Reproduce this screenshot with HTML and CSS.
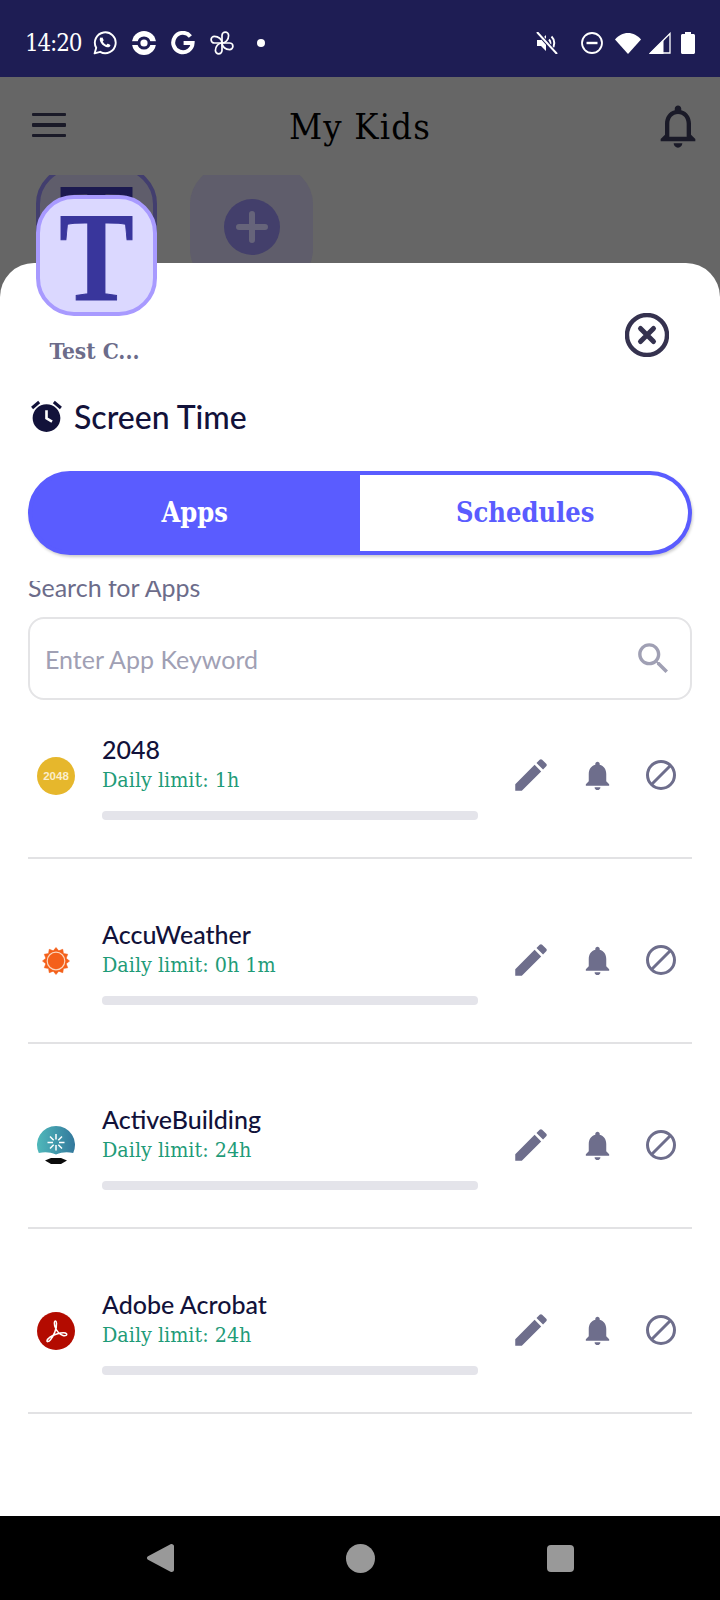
FILE: index.html
```html
<!DOCTYPE html>
<html lang="en">
<head>
<meta charset="utf-8">
<title>My Kids</title>
<link rel="stylesheet" href="styles.css">
</head>
<body>
<div class="status">
  <span class="time">14:20</span>
  <svg class="st st-wa" viewBox="0 0 24 24"><path class="ol" d="M1.600 22.400l1.600-5.600A10.400 10.400 0 1 1 7.200 20.800z"/><path class="wf" d="M8.600 6.800c.3-.3.9-.3 1.100.1l.9 2c.1.3 0 .6-.2.8l-.7.8c.8 1.500 2 2.700 3.600 3.400l.9-.9c.2-.2.5-.3.8-.2l2 1c.4.2.5.6.3 1-.6 1.100-1.700 1.700-2.900 1.500-3.700-.7-7.100-4-7.700-7.600-.1-.9.2-1.500.7-2.100z"/></svg>
  <svg class="st st-pk" viewBox="0 0 24 24"><circle class="wf" cx="12" cy="12" r="12"/><rect class="df" x="0" y="10.200" width="24" height="3.800"/><circle class="df" cx="12" cy="12" r="6.600"/><circle class="wf" cx="12" cy="12" r="3.600"/></svg>
  <svg class="st st-g" viewBox="0 0 24 24"><path class="gs" d="M19.400 5.400A9.700 9.700 0 1 0 21.600 12H12.600"/></svg>
  <svg class="st st-pin" viewBox="0 0 24 24"><g class="pw"><path d="M12 12V4.400a3.300 3.300 0 0 1 6.600 0c0 4-2.800 7.600-6.600 7.600z"/><path transform="rotate(90 12 12)" d="M12 12V4.400a3.300 3.300 0 0 1 6.600 0c0 4-2.800 7.600-6.600 7.600z"/><path transform="rotate(180 12 12)" d="M12 12V4.400a3.300 3.300 0 0 1 6.600 0c0 4-2.800 7.600-6.600 7.600z"/><path transform="rotate(270 12 12)" d="M12 12V4.400a3.300 3.300 0 0 1 6.600 0c0 4-2.800 7.600-6.600 7.600z"/></g></svg>
  <span class="dot"></span>
  <div class="st-right">
    <svg class="st st-mute" viewBox="0 0 22 22"><path class="wf" d="M1 8v6h4l5 5V3L5 8z"/><path class="ms" d="M13 7.500a5 5 0 0 1 0 7M15.500 4.500a9 9 0 0 1 0 13"/><path class="mk" d="M2 1l18 20"/><path class="ml" d="M1 0l20 22"/></svg>
    <svg class="st st-dnd" viewBox="0 0 22 22"><circle class="dn" cx="11" cy="11" r="10"/><rect class="wf" x="5.500" y="9.800" width="11" height="2.400"/></svg>
    <svg class="st st-wifi" viewBox="0 0 26 21"><path class="wf" d="M0 6.500C3.400 2.400 8 0 13 0s9.600 2.400 13 6.500L13 21z"/></svg>
    <svg class="st st-sig" viewBox="0 0 22 22"><path class="sg" d="M21 1.500V21H1.500z"/><path class="wf" d="M14.500 8v14H0z"/></svg>
    <svg class="st st-bat" viewBox="0 0 14 22"><path class="wf" d="M4 2V0h6v2h2.500c.8 0 1.500.7 1.500 1.500v17c0 .8-.7 1.500-1.500 1.500h-11C.7 22 0 21.300 0 20.500v-17C0 2.700.7 2 1.500 2z"/></svg>
  </div>
</div>

<div class="screen">
  <header class="topbar">
    <div class="burger"><span></span><span></span><span></span></div>
    <h1 class="title">My Kids</h1>
    <svg class="top-bell" viewBox="0 0 24 24"><path d="M12 22c1.100 0 2-.9 2-2h-4c0 1.100.89 2 2 2zm6-6v-5c0-3.070-1.640-5.640-4.500-6.320V4c0-.83-.67-1.500-1.500-1.500s-1.500.67-1.500 1.500v.68C7.630 5.360 6 7.920 6 11v5l-2 2v1h16v-1l-2-2zm-2 1H8v-6c0-2.480 1.510-4.500 4-4.500s4 2.020 4 4.500v6z"/></svg>
  </header>
  <div class="kids">
    <div class="kid-tile"><span class="kid-letter">T</span></div>
    <div class="add-tile"><svg class="add-icon" viewBox="0 0 56 56"><circle cx="28" cy="28" r="28"/><path d="M28 15v26M15 28h26"/></svg></div>
  </div>

  <section class="sheet">
    <div class="sheet-top">
      <div class="kid-col">
        <div class="avatar"><span class="avatar-letter">T</span></div>
        <div class="kid-name">Test C...</div>
      </div>
      <svg class="close" viewBox="0 0 44 44"><circle cx="22" cy="22" r="20"/><path d="M15.500 15.500l13 13M28.500 15.500l-13 13"/></svg>
    </div>

    <div class="heading">
      <svg class="alarm" viewBox="0 0 24 24"><path class="al" d="M22 5.720l-4.600-3.860-1.290 1.530 4.600 3.860L22 5.720zM7.880 3.390L6.600 1.860 2 5.710l1.290 1.530 4.590-3.850zM12 4c-4.970 0-9 4.030-9 9s4.020 9 9 9c4.970 0 9-4.030 9-9s-4.030-9-9-9z"/><path class="ah" d="M12 8v5.200l3.600 2.200"/></svg>
      <h2 class="heading-text">Screen Time</h2>
    </div>

    <div class="segment">
      <div class="seg seg-on">Apps</div>
      <div class="seg seg-off">Schedules</div>
    </div>

    <div class="scroll">
      <div class="search-label">Search for Apps</div>
      <div class="search">
        <span class="placeholder">Enter App Keyword</span>
        <svg class="search-icon" viewBox="0 0 24 24"><path d="M15.500 14h-.79l-.28-.27C15.410 12.590 16 11.110 16 9.500 16 5.910 13.090 3 9.500 3S3 5.910 3 9.500 5.910 16 9.500 16c1.610 0 3.090-.59 4.230-1.570l.27.28v.79l5 4.990L20.490 19l-4.990-5zm-6 0C7.010 14 5 11.990 5 9.500S7.010 5 9.500 5 14 7.010 14 9.500 11.990 14 9.500 14z"/></svg>
      </div>

      <div class="list">
        <article class="row">
          <div class="app-icon ic-2048"><span>2048</span></div>
          <div class="info">
            <div class="app-name">2048</div>
            <div class="limit">Daily limit: 1h</div>
            <div class="bar"></div>
          </div>
          <div class="actions">
            <svg class="a-edit" viewBox="0 0 24 24"><path d="M3 17.250V21h3.750L17.810 9.940l-3.750-3.750L3 17.250zM20.710 7.040c.39-.39.39-1.020 0-1.410l-2.340-2.340c-.39-.39-1.020-.39-1.410 0l-1.830 1.830 3.750 3.750 1.830-1.830z"/></svg>
            <svg class="a-bell" viewBox="0 0 24 24"><path d="M12 22c1.100 0 2-.9 2-2h-4c0 1.100.89 2 2 2zm6-6v-5c0-3.070-1.640-5.640-4.500-6.320V4c0-.83-.67-1.500-1.500-1.500s-1.500.67-1.500 1.500v.68C7.630 5.360 6 7.920 6 11v5l-2 2v1h16v-1l-2-2z"/></svg>
            <svg class="a-ban" viewBox="0 0 32 32"><circle cx="16" cy="16" r="13.500"/><path d="M6.500 25.500l19-19"/></svg>
          </div>
        </article>

        <article class="row">
          <div class="app-icon">
            <svg class="logo" viewBox="0 0 38 38"><polygon class="sun-spikes" points="19,5.500 21.720,8.860 25.750,7.310 26.420,11.580 30.690,12.250 29.140,16.280 32.500,19 29.140,21.720 30.690,25.750 26.420,26.420 25.750,30.690 21.720,29.140 19,32.500 16.280,29.140 12.250,30.690 11.580,26.420 7.310,25.750 8.860,21.720 5.500,19 8.860,16.280 7.310,12.250 11.580,11.580 12.250,7.310 16.280,8.860"/><circle class="sun-ring" cx="19" cy="19" r="8.800"/></svg>
          </div>
          <div class="info">
            <div class="app-name">AccuWeather</div>
            <div class="limit">Daily limit: 0h 1m</div>
            <div class="bar"></div>
          </div>
          <div class="actions">
            <svg class="a-edit" viewBox="0 0 24 24"><path d="M3 17.250V21h3.750L17.810 9.940l-3.750-3.750L3 17.250zM20.710 7.040c.39-.39.39-1.020 0-1.410l-2.340-2.340c-.39-.39-1.020-.39-1.410 0l-1.830 1.830 3.750 3.750 1.830-1.830z"/></svg>
            <svg class="a-bell" viewBox="0 0 24 24"><path d="M12 22c1.100 0 2-.9 2-2h-4c0 1.100.89 2 2 2zm6-6v-5c0-3.070-1.640-5.640-4.500-6.320V4c0-.83-.67-1.500-1.500-1.500s-1.500.67-1.500 1.500v.68C7.630 5.360 6 7.920 6 11v5l-2 2v1h16v-1l-2-2z"/></svg>
            <svg class="a-ban" viewBox="0 0 32 32"><circle cx="16" cy="16" r="13.500"/><path d="M6.500 25.500l19-19"/></svg>
          </div>
        </article>

        <article class="row">
          <div class="app-icon">
            <svg class="logo" viewBox="0 0 38 38"><defs><linearGradient id="ab" x1="0" y1="0" x2="1" y2="0"><stop offset="0" stop-color="#4fb8ba"/><stop offset="1" stop-color="#33789c"/></linearGradient></defs><path fill="url(#ab)" d="M1.800 26A19 19 0 1 1 36.200 26C30 24.600 25 25 19 27.500 13 25 8 24.600 1.800 26z"/><path class="burst" d="M19 7v5.500M19 18v5.500M10.500 15.500h5.500M22 15.500h5.500M13 9.500l3.700 3.700M21.300 17.800l3.700 3.700M25 9.500l-3.700 3.700M16.700 17.800l-3.700 3.700"/><path class="dark" d="M8 33.500l6-2.500h10l6 2.500-6 3.500h-10z"/></svg>
          </div>
          <div class="info">
            <div class="app-name">ActiveBuilding</div>
            <div class="limit">Daily limit: 24h</div>
            <div class="bar"></div>
          </div>
          <div class="actions">
            <svg class="a-edit" viewBox="0 0 24 24"><path d="M3 17.250V21h3.750L17.810 9.940l-3.750-3.750L3 17.250zM20.710 7.040c.39-.39.39-1.020 0-1.410l-2.340-2.340c-.39-.39-1.020-.39-1.410 0l-1.830 1.830 3.750 3.750 1.830-1.830z"/></svg>
            <svg class="a-bell" viewBox="0 0 24 24"><path d="M12 22c1.100 0 2-.9 2-2h-4c0 1.100.89 2 2 2zm6-6v-5c0-3.070-1.640-5.640-4.500-6.320V4c0-.83-.67-1.500-1.500-1.500s-1.500.67-1.500 1.500v.68C7.630 5.360 6 7.920 6 11v5l-2 2v1h16v-1l-2-2z"/></svg>
            <svg class="a-ban" viewBox="0 0 32 32"><circle cx="16" cy="16" r="13.500"/><path d="M6.500 25.500l19-19"/></svg>
          </div>
        </article>

        <article class="row">
          <div class="app-icon">
            <svg class="logo" viewBox="0 0 38 38"><circle class="red" cx="19" cy="19" r="19"/><path class="acro" d="M18.500 9c-1.500 0-1.500 3.500 0 7 1.500 3.500 4.500 6.500 7.500 7.500 2.500.8 4.500-.5 3.500-1.800-1-1.200-5.500-1-10.500.5-4.500 1.400-8.500 4.500-9 6.500-.3 1.300 1.500 1.500 3.500-1 3-3.700 6.500-11 6-16.500-.1-1.200-.5-2.200-1-2.200z"/></svg>
          </div>
          <div class="info">
            <div class="app-name">Adobe Acrobat</div>
            <div class="limit">Daily limit: 24h</div>
            <div class="bar"></div>
          </div>
          <div class="actions">
            <svg class="a-edit" viewBox="0 0 24 24"><path d="M3 17.250V21h3.750L17.810 9.940l-3.750-3.750L3 17.250zM20.710 7.040c.39-.39.39-1.020 0-1.410l-2.340-2.340c-.39-.39-1.020-.39-1.410 0l-1.830 1.830 3.750 3.750 1.830-1.830z"/></svg>
            <svg class="a-bell" viewBox="0 0 24 24"><path d="M12 22c1.100 0 2-.9 2-2h-4c0 1.100.89 2 2 2zm6-6v-5c0-3.070-1.640-5.640-4.500-6.320V4c0-.83-.67-1.500-1.500-1.500s-1.500.67-1.500 1.500v.68C7.630 5.360 6 7.920 6 11v5l-2 2v1h16v-1l-2-2z"/></svg>
            <svg class="a-ban" viewBox="0 0 32 32"><circle cx="16" cy="16" r="13.500"/><path d="M6.500 25.500l19-19"/></svg>
          </div>
        </article>
      </div>
    </div>
  </section>
</div>

<nav class="navbar">
  <svg class="nav-back" viewBox="0 0 28 30"><path d="M24.500 1.200 2 13.200c-1.400.8-1.400 2.800 0 3.600l22.500 12c1.500.8 3.500-.2 3.500-2V3.200c0-1.800-2-2.800-3.500-2z"/></svg>
  <span class="nav-home"></span>
  <span class="nav-recent"></span>
</nav>
</body>
</html>
```

FILE: styles.css
```css
* { box-sizing: border-box; }
html, body { margin: 0; padding: 0; }
body {
  width: 720px;
  height: 1600px;
  display: flex;
  flex-direction: column;
  overflow: hidden;
  background: #fff;
  font-family: "Lato", sans-serif;
}

/* status bar */
.status {
  height: 77px;
  flex: none;
  background: #1e1d54;
  display: flex;
  align-items: center;
  padding: 9px 25px 0 25px;
  color: #fff;
}
.time {
  font-family: "DejaVu Serif Condensed", "DejaVu Serif", serif;
  font-size: 24px;
  width: 56px;
  letter-spacing: -1.2px;
  white-space: nowrap;
}
.st { display: block; flex: none; }
.wf { fill: #fff; }
.df { fill: #1e1d54; }
.ol { fill: none; stroke: #fff; stroke-width: 1.9; stroke-linejoin: round; }
.gs { fill: none; stroke: #fff; stroke-width: 4; }
.pw path { fill: none; stroke: #fff; stroke-width: 1.7; stroke-linejoin: round; }
.ms { fill: none; stroke: #fff; stroke-width: 2; }
.mk { fill: none; stroke: #1e1d54; stroke-width: 4; }
.ml { fill: none; stroke: #fff; stroke-width: 2; }
.dn { fill: none; stroke: #fff; stroke-width: 1.8; }
.sg { fill: none; stroke: #fff; stroke-width: 1.3; }
.st-wa { width: 24px; height: 24px; margin-left: 12px; }
.st-pk { width: 24px; height: 24px; margin-left: 15px; }
.st-g { width: 24px; height: 24px; margin-left: 15px; }
.st-pin { width: 24px; height: 24px; margin-left: 15px; }
.dot { width: 8px; height: 8px; border-radius: 50%; background: #fff; margin-left: 23px; flex: none; }
.st-right { margin-left: auto; display: flex; align-items: center; }
.st-mute { width: 22px; height: 22px; }
.st-dnd { width: 22px; height: 22px; margin-left: 23px; }
.st-wifi { width: 26px; height: 21px; margin-left: 12px; }
.st-sig { width: 22px; height: 22px; margin-left: 8px; }
.st-bat { width: 14px; height: 22px; margin-left: 10px; }

/* dimmed screen */
.screen {
  flex: 1;
  position: relative;
  background: #666;
  min-height: 0;
}
.topbar {
  height: 98px;
  display: grid;
  grid-template-columns: 1fr auto 1fr;
  align-items: center;
  padding: 0 16px;
}
.burger {
  display: flex;
  flex-direction: column;
  gap: 7px;
  width: 34px;
  margin: -2px 0 0 16px;
}
.burger span { height: 3.5px; background: #1a1a28; border-radius: 1px; }
.title {
  margin: 0;
  font-family: "DejaVu Serif Condensed", "DejaVu Serif", serif;
  font-weight: 400;
  font-size: 36px;
  letter-spacing: 1.2px;
  color: #000;
  white-space: nowrap;
}
.top-bell { width: 52px; height: 52px; justify-self: end; fill: #1a1a28; }

.kids {
  height: 88px;
  overflow: hidden;
  display: flex;
  gap: 33px;
  padding-left: 36px;
}
.kid-tile, .add-tile {
  flex: none;
  margin-top: -9px;
  height: 121px;
  border-radius: 38px;
  background: #5f5d6b;
  display: flex;
  align-items: center;
  justify-content: center;
}
.kid-tile {
  width: 121px;
  border: 4px solid #423e6e;
  color: #1c1a50;
}
.add-tile { width: 123px; }
.kid-letter, .avatar-letter {
  display: inline-block;
  font-family: "Liberation Serif", serif;
  font-weight: 700;
  font-size: 124px;
  line-height: 1;
  -webkit-text-stroke: 1px currentColor;
  transform: translateY(2px) scale(.9, 1.03);
}
.add-icon { width: 56px; height: 56px; }
.add-icon circle { fill: #433f6b; }
.add-icon path { fill: none; stroke: #66647a; stroke-width: 6; stroke-linecap: round; }

/* sheet */
.sheet {
  position: absolute;
  top: 186px;
  left: 0;
  right: 0;
  bottom: 0;
  background: #fff;
  border-radius: 34px 34px 0 0;
  padding: 0 28px;
  display: flex;
  flex-direction: column;
}
.sheet-top {
  display: flex;
  justify-content: space-between;
  align-items: flex-start;
  margin-top: -68px;
}
.kid-col { margin-left: 8px; width: 121px; }
.avatar {
  width: 121px;
  height: 121px;
  border: 4.5px solid #a89aff;
  border-radius: 38px;
  background: #dbd8ff;
  color: #39369c;
  display: flex;
  align-items: center;
  justify-content: center;
}
.kid-name {
  margin-top: 20px;
  padding-right: 4px;
  text-align: center;
  font-family: "DejaVu Serif Condensed", "DejaVu Serif", serif;
  font-weight: 700;
  font-size: 22.5px;
  line-height: 30px;
  color: #6c6c8a;
  white-space: nowrap;
}
.close { width: 44px; height: 44px; margin: 118px 23px 0 0; flex: none; }
.close circle { fill: none; stroke: #35324f; stroke-width: 4.4; }
.close path { fill: none; stroke: #35324f; stroke-width: 5; stroke-linecap: round; }

.heading {
  display: flex;
  align-items: center;
  margin-top: 30px;
  height: 40px;
  gap: 9px;
}
.alarm { width: 37px; height: 37px; flex: none; }
.al { fill: #12123a; }
.ah { fill: none; stroke: #fff; stroke-width: 1.7; }
.heading-text {
  margin: 0;
  font-weight: 500;
  font-size: 32px;
  color: #12123a;
  white-space: nowrap;
}

.segment {
  margin-top: 34.5px;
  height: 84px;
  border: 4px solid #5a5cff;
  border-radius: 42px;
  background: #5a5cff;
  overflow: hidden;
  display: flex;
  flex: none;
  box-shadow: 1px 2px 3px rgba(0, 0, 0, .2);
  font-family: "DejaVu Serif Condensed", "DejaVu Serif", serif;
  font-weight: 700;
  font-size: 27px;
}
.seg { flex: 1; display: flex; align-items: center; justify-content: center; }
.seg-on { color: #fff; padding-right: 2px; }
.seg-off { background: #fff; color: #5a5cff; padding-left: 3px; }

.scroll {
  flex: 1;
  min-height: 0;
  overflow: hidden;
  margin-top: 26.5px;
}
.search-label {
  margin-top: -9px;
  height: 30px;
  line-height: 30px;
  font-size: 25px;
  color: #6c6c8a;
  white-space: nowrap;
}
.search {
  margin-top: 15px;
  height: 83px;
  border: 2px solid #e4e4e6;
  border-radius: 16px;
  display: flex;
  align-items: center;
  justify-content: space-between;
  padding: 0 16px 0 15px;
}
.placeholder { font-size: 25px; color: #a0a0b4; white-space: nowrap; }
.search-icon { width: 41px; height: 41px; fill: #a0a0b4; flex: none; }

.list {
  margin-top: 35px;
  display: flex;
  flex-direction: column;
  gap: 61.5px;
}
.row {
  display: flex;
  align-items: flex-start;
  padding: 0 0 36.5px 9px;
  border-bottom: 2px solid #e2e2e4;
}
.app-icon {
  width: 38px;
  height: 38px;
  flex: none;
  margin-top: 22px;
  margin-right: 27px;
}
.ic-2048 {
  border-radius: 50%;
  background: #e6b72c;
  display: flex;
  align-items: center;
  justify-content: center;
  color: #fbeecb;
  font-family: "Liberation Sans", sans-serif;
  font-weight: 700;
  font-size: 11.5px;
}
.logo { display: block; width: 38px; height: 38px; overflow: visible; }
.sun-spikes { fill: #f4601a; stroke: #f4601a; stroke-width: .6; stroke-linejoin: round; }
.sun-ring { fill: #f4601a; stroke: #fbd7be; stroke-width: 1.2; }
.burst { fill: none; stroke: #fff; stroke-width: 1.5; }
.dark { fill: #0b0b0b; }
.red { fill: #b30b00; }
.acro { fill: none; stroke: #fff; stroke-width: 1.5; stroke-linejoin: round; }

.info { width: 376px; flex: none; }
.app-name {
  height: 30px;
  line-height: 29px;
  font-size: 25px;
  font-weight: 500;
  color: #12123a;
  white-space: nowrap;
}
.limit {
  height: 30px;
  line-height: 29px;
  font-family: "DejaVu Serif Condensed", "DejaVu Serif", serif;
  font-size: 21.3px;
  color: #1f9b78;
  white-space: nowrap;
}
.bar {
  margin-top: 16px;
  height: 9px;
  border-radius: 4px;
  background: #e4e4ea;
}
.actions {
  display: flex;
  align-items: center;
  margin-left: 32px;
  margin-top: 19px;
}
.actions svg { flex: none; display: block; }
.a-edit { width: 42px; height: 42px; fill: #6e6e8c; }
.a-bell { width: 35px; height: 35px; margin-left: 28px; fill: #6e6e8c; }
.a-ban { width: 32px; height: 32px; margin-left: 29.5px; }
.a-ban circle, .a-ban path { fill: none; stroke: #6e6e8c; stroke-width: 3; }

/* nav */
.navbar {
  height: 84px;
  flex: none;
  background: #000;
  display: flex;
  align-items: center;
  gap: 172px;
  padding: 0 0 0 146px;
}
.nav-back { width: 28px; height: 30px; fill: #999; flex: none; }
.nav-home { width: 29px; height: 29px; border-radius: 50%; background: #999; flex: none; }
.nav-recent { width: 27px; height: 27px; border-radius: 4px; background: #999; flex: none; }
```
